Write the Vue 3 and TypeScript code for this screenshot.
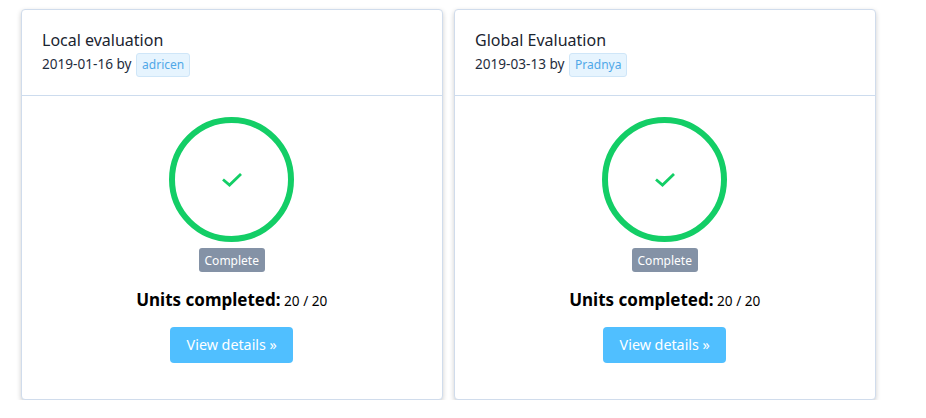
<template>
  <div class="page">
    <div v-for="card in cards" :key="card.title" class="card">
      <div class="card-header">
        <div class="card-title">{{ card.title }}</div>
        <div class="card-meta">
          {{ card.date }} by <span class="tag">{{ card.author }}</span>
        </div>
      </div>
      <div class="card-body">
        <div class="progress">
          <svg width="20" height="14" viewBox="0 0 20 14">
            <path d="M1 6.5 L7.5 12 L19 1" fill="none" stroke="#13ce66" stroke-width="2.8" />
          </svg>
        </div>
        <span class="status">Complete</span>
        <p class="units"><strong>Units completed:</strong> <span>{{ card.done }} / {{ card.total }}</span></p>
        <button class="btn">View details »</button>
      </div>
    </div>
  </div>
</template>

<script setup lang="ts">
interface EvalCard {
  title: string;
  date: string;
  author: string;
  done: number;
  total: number;
}

const cards: EvalCard[] = [
  { title: 'Local evaluation', date: '2019-01-16', author: 'adricen', done: 20, total: 20 },
  { title: 'Global Evaluation', date: '2019-03-13', author: 'Pradnya', done: 20, total: 20 }
];
</script>

<style>
html, body {
  background: #fff;
}
</style>

<style scoped>
.page {
  display: flex;
  gap: 11.5px;
  padding: 9px 0 0 21px;
  font-family: "Noto Sans", "Open Sans", sans-serif;
  color: #1f2d3d;
}

.card {
  width: 421.5px;
  height: 391px;
  box-sizing: border-box;
  border: 1px solid #d0dcec;
  border-radius: 4px;
  box-shadow: 0 2px 5px rgba(0, 0, 0, 0.2);
  background: #fff;
}

.card-header {
  height: 86px;
  box-sizing: border-box;
  padding: 19px 20px 0;
  border-bottom: 1px solid #cddcee;
}

.card-title {
  font-size: 16px;
  line-height: 22px;
  color: #1a2430;
}

.card-meta {
  font-size: 13.6px;
  line-height: 26px;
  color: #1f2d3d;
}

.tag {
  display: inline-block;
  height: 24px;
  box-sizing: border-box;
  padding: 0 5px;
  line-height: 22px;
  margin-left: 1px;
  font-size: 12px;
  color: #50a8e8;
  background: #e6f4fe;
  border: 1px solid #cfe6f8;
  border-radius: 3px;
}

.card-body {
  display: flex;
  flex-direction: column;
  align-items: center;
  padding-top: 21px;
}

.progress {
  width: 125px;
  height: 125px;
  box-sizing: border-box;
  border: 6px solid #13ce66;
  border-radius: 50%;
  display: flex;
  align-items: center;
  justify-content: center;
}

.status {
  margin-top: 6px;
  width: 66px;
  height: 24px;
  text-align: center;
  line-height: 25px;
  font-size: 12px;
  color: #fff;
  background: #8492a6;
  border-radius: 3px;
}

.units {
  margin: 16px 0 0;
  line-height: 24px;
  font-size: 13.6px;
  color: #000;
}

.units strong {
  font-size: 17px;
  font-weight: 700;
}

.btn {
  margin-top: 14px;
  width: 123px;
  height: 36px;
  border: none;
  border-radius: 4px;
  background: #50bfff;
  color: #fff;
  font-family: inherit;
  font-size: 14.3px;
  padding: 0 0 2px;
}
</style>
